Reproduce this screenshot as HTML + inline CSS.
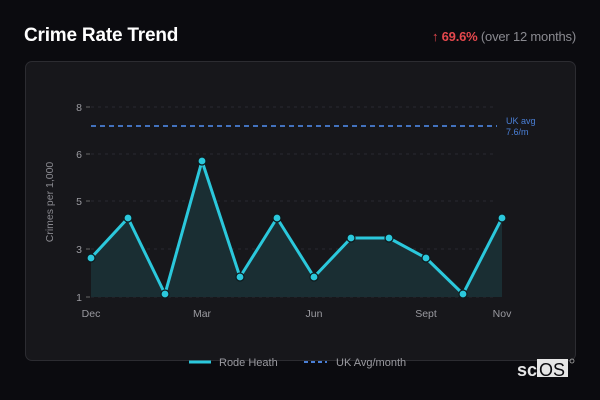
<!DOCTYPE html>
<html><head><style>
html,body{margin:0;padding:0;width:600px;height:400px;background:#0b0b0f;overflow:hidden;font-family:"Liberation Sans","DejaVu Sans",sans-serif;}
.t{position:absolute;left:24px;top:25px;color:#fff;font-weight:bold;font-size:19px;font-family:"Liberation Sans",sans-serif;letter-spacing:-0.2px}
.r{position:absolute;right:24px;top:29px;font-size:13px;color:#8a8a90;font-family:"Liberation Sans",sans-serif;letter-spacing:-0.2px}
.r b{color:#e5484d}
.card{position:absolute;left:25px;top:61px;width:549px;height:298px;background:#17171b;border:1px solid #2c2c31;border-radius:7px}
svg{position:absolute;left:0;top:0}
</style></head><body>
<div class="t">Crime Rate Trend</div>
<div class="r"><b>↑ 69.6%</b> (over 12 months)</div>
<div class="card"></div>
<svg width="600" height="400" font-family="Liberation Sans, sans-serif">
<g stroke="#2a2a30" stroke-dasharray="3,4" stroke-width="1">
<line x1="91" y1="107" x2="497" y2="107"/><line x1="91" y1="154" x2="497" y2="154"/><line x1="91" y1="201" x2="497" y2="201"/><line x1="91" y1="249" x2="497" y2="249"/><line x1="91" y1="297" x2="497" y2="297"/>
</g>
<g stroke="#666" stroke-width="1"><line x1="86" y1="107" x2="90" y2="107"/><line x1="86" y1="154" x2="90" y2="154"/><line x1="86" y1="201" x2="90" y2="201"/><line x1="86" y1="249" x2="90" y2="249"/><line x1="86" y1="297" x2="90" y2="297"/></g>
<g fill="#9a9aa0" font-size="10.5" text-anchor="end"><text x="82" y="111">8</text><text x="82" y="158">6</text><text x="82" y="205">5</text><text x="82" y="253">3</text><text x="82" y="301">1</text></g>
<text transform="translate(53,202) rotate(-90)" fill="#8a8a90" font-size="10.5" text-anchor="middle">Crimes per 1,000</text>
<polygon fill="#1a2e33" points="91,297 91,258 128,218 165,294 202,161 240,277 277,218 314,277 351,238 389,238 426,258 463,294 502,218 502,297"/>
<line x1="91" y1="126" x2="497" y2="126" stroke="#4a7fd6" stroke-width="1.8" stroke-dasharray="5,4"/>
<text x="506" y="124" fill="#4a7fd6" font-size="9">UK avg</text><text x="506" y="135" fill="#4a7fd6" font-size="9">7.6/m</text>
<polyline fill="none" stroke="#2bc8dc" stroke-width="3" stroke-linejoin="round" points="91,258 128,218 165,294 202,161 240,277 277,218 314,277 351,238 389,238 426,258 463,294 502,218"/>
<g fill="#2bc8dc" stroke="#0e1a1d" stroke-width="1.2">
<circle cx="91" cy="258" r="4"/><circle cx="128" cy="218" r="4"/><circle cx="165" cy="294" r="4"/><circle cx="202" cy="161" r="4"/><circle cx="240" cy="277" r="4"/><circle cx="277" cy="218" r="4"/><circle cx="314" cy="277" r="4"/><circle cx="351" cy="238" r="4"/><circle cx="389" cy="238" r="4"/><circle cx="426" cy="258" r="4"/><circle cx="463" cy="294" r="4"/><circle cx="502" cy="218" r="4"/></g>
<g fill="#9a9aa0" font-size="10.5" text-anchor="middle"><text x="91" y="317">Dec</text><text x="202" y="317">Mar</text><text x="314" y="317">Jun</text><text x="426" y="317">Sept</text><text x="502" y="317">Nov</text></g>
<line x1="189" y1="362" x2="211" y2="362" stroke="#2bc8dc" stroke-width="3"/>
<text x="219" y="366" fill="#9a9aa0" font-size="11">Rode Heath</text>
<line x1="304" y1="362" x2="327" y2="362" stroke="#4a7fd6" stroke-width="2" stroke-dasharray="4,3"/>
<text x="336" y="366" fill="#9a9aa0" font-size="11">UK Avg/month</text>
<rect x="537" y="359" width="31" height="18" fill="#e6e6e6"/>
<text x="517" y="376" fill="#e6e6e6" font-size="18" font-weight="bold" font-family="Liberation Sans, sans-serif">sc</text>
<text x="539" y="376" fill="#0b0b0f" font-size="18" font-family="Liberation Sans, sans-serif">OS</text>
<circle cx="572" cy="361" r="2" fill="none" stroke="#aaa" stroke-width="0.8"/>
</svg>
</body></html>
